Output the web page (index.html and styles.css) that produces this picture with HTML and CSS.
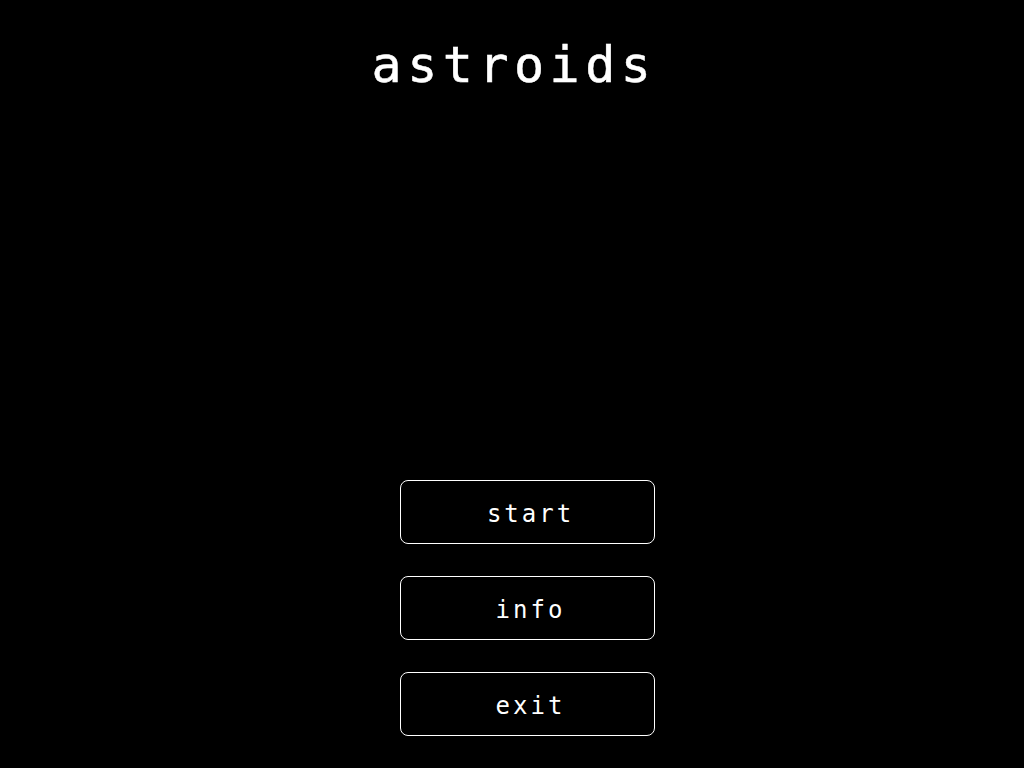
FILE: index.html
```html
<!DOCTYPE html>
<html>
<head>
<meta charset="utf-8">
<link rel="stylesheet" href="styles.css">
</head>
<body>
<main class="screen">
  <h1 class="title">astroids</h1>
  <nav class="menu">
    <button class="btn">start</button>
    <button class="btn">info</button>
    <button class="btn">exit</button>
  </nav>
</main>
</body>
</html>
```
FILE: styles.css
```css
html, body {
  margin: 0;
  padding: 0;
  background: #000;
  height: 100%;
}
.screen {
  height: 768px;
  display: flex;
  flex-direction: column;
  align-items: center;
  font-family: "DejaVu Sans Mono", monospace;
  color: #fff;
}
.title {
  margin: 30px 0 0 4px;
  font-size: 50px;
  font-weight: normal;
  letter-spacing: 5.5px;
  line-height: 70px;
  -webkit-text-stroke: 0.5px #fff;
}
.menu {
  margin: 380px 0 0 31px;
  display: flex;
  flex-direction: column;
  gap: 32px;
}
.btn {
  width: 255px;
  height: 64px;
  background: #000;
  color: #fff;
  border: 1px solid #fff;
  border-radius: 8px;
  font-family: "DejaVu Sans Mono", monospace;
  font-size: 24px;
  letter-spacing: 3px;
  padding: 4px 0 0 6px;
}
```
